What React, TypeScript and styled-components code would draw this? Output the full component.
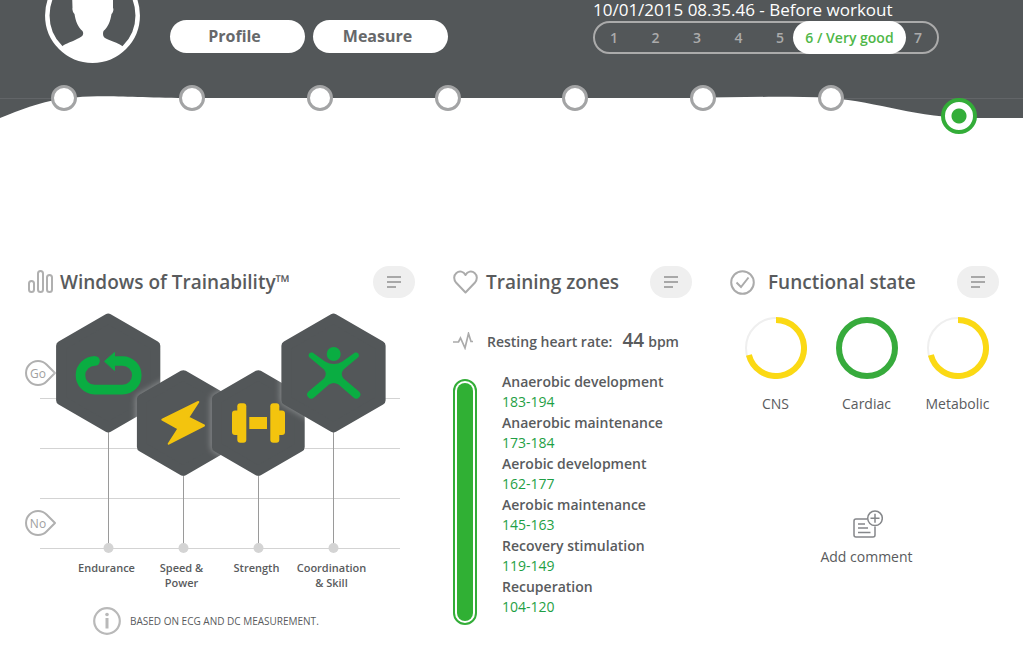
import React from "react";
import styled, { createGlobalStyle } from "styled-components";

const ink = "#595b5d";
const slate = "#535759";
const green = "#33ad38";
const grey = "#ababab";

const GlobalStyle = createGlobalStyle`
  *, *::before, *::after { box-sizing: border-box; }
  body {
    margin: 0;
    background: #fff;
    color: ${ink};
    font-family: "Open Sans", "Noto Sans", sans-serif;
    font-size: 14px;
  }
  button { font: inherit; color: inherit; border: 0; padding: 0; cursor: pointer; }
  ul, ol, dl, dd, h2, p, figure { margin: 0; padding: 0; list-style: none; }
`;

const Header = styled.header`
  position: relative;
  background: ${slate};
`;

const TopBar = styled.div`
  position: relative;
  z-index: 1;
  display: flex;
  align-items: flex-start;
  height: 80px;
  padding: 0 84px 0 44px;
`;

const Avatar = styled.svg`
  flex: none;
  width: 96px;
  height: 64px;
`;

const Actions = styled.nav`
  display: flex;
  gap: 8px;
  padding: 20px 0 0 30px;
`;

const PillButton = styled.button`
  width: 135px;
  height: 33px;
  padding-right: 6px;
  border-radius: 17px;
  background: #fff;
  color: #66686a;
  font-size: 16px;
  font-weight: 700;
  line-height: 33px;
`;

const Session = styled.section`
  width: 346px;
  margin-left: auto;
`;

const SessionTitle = styled.p`
  height: 21px;
  color: #fff;
  font-size: 17px;
  line-height: 19px;
  white-space: nowrap;
`;

const Levels = styled.div`
  display: flex;
  height: 33px;
  border: 2px solid ${grey};
  border-radius: 17px;
  color: ${grey};
  font-size: 14px;
  font-weight: 600;
  line-height: 29px;
`;

const LevelGroup = styled.ol`
  display: flex;
  flex: 1;
  justify-content: space-between;
  padding: 0 9px 0 15px;
`;

const CurrentLevel = styled.strong`
  width: 113px;
  margin: -2px 0;
  border-radius: 17px;
  background: #fff;
  color: #4fb748;
  font-weight: 600;
  line-height: 33px;
  text-align: center;
`;

const LastLevel = styled.span`
  width: 31px;
  padding-left: 8px;
`;

const Wave = styled.svg`
  position: absolute;
  inset: 80px 0 auto;
  width: 100%;
  height: 40px;
`;

const Timeline = styled.ol`
  position: relative;
  display: flex;
  height: 38px;
`;

const TimelineItem = styled.li<{ $current?: boolean }>`
  display: flex;
  flex: 1;
  justify-content: center;
  align-items: flex-start;
  padding-top: ${(p) => (p.$current ? 18 : 5)}px;
`;

const TimelineDot = styled.button<{ $current?: boolean }>`
  flex: none;
  width: ${(p) => (p.$current ? 36 : 26)}px;
  height: ${(p) => (p.$current ? 36 : 26)}px;
  border: ${(p) => (p.$current ? `4px solid ${green}` : "3px solid #a3a4a5")};
  border-radius: 50%;
  background: ${(p) => (p.$current ? `radial-gradient(circle, ${green} 7px, #fff 8px)` : "#fff")};
`;

const Main = styled.main`
  display: grid;
  grid-template-columns: 391fr 239fr 273fr;
  gap: 38px;
  padding: 148px 20px 24px 24px;
`;

const PanelHeader = styled.header<{ $gap?: number; $end?: number }>`
  display: flex;
  align-items: center;
  gap: ${(p) => p.$gap ?? 8}px;
  height: 32px;
  padding-right: ${(p) => p.$end ?? 0}px;

  svg { flex: none; }
`;

const PanelTitle = styled.h2`
  flex: 1;
  font-size: 19px;
  font-weight: 600;
  line-height: 32px;
  white-space: nowrap;
`;

const MenuButton = styled.button`
  display: grid;
  place-items: center;
  width: 42px;
  height: 32px;
  border-radius: 16px;
  background: #efefef;
`;

const Chart = styled.figure`
  width: 376px;
  margin-top: 12px;

  svg { display: block; }
`;

const ChartLabels = styled.ul`
  display: grid;
  grid-template-columns: repeat(4, 75px);
  padding: 4px 0 0 45px;
  font-size: 11px;
  font-weight: 600;
  line-height: 15px;
  text-align: center;
`;

const Note = styled.p`
  display: flex;
  align-items: center;
  gap: 8px;
  padding: 16px 0 0 68px;
  font-size: 10px;
  line-height: 30px;
`;

const RestingRate = styled.p`
  display: flex;
  align-items: center;
  gap: 14px;
  height: 32px;
  margin-top: 27px;
  font-weight: 600;
  line-height: 32px;
  white-space: nowrap;
`;

const Rate = styled.span`
  display: flex;
  align-items: baseline;
  gap: 4px;
`;

const RateValue = styled.strong`
  padding-left: 6px;
  font-size: 19px;
  font-weight: 600;
`;

const Zones = styled.div`
  display: flex;
  gap: 25px;
  margin-top: 15px;
`;

const ZoneGauge = styled.div`
  width: 24px;
  margin: 7px 0 -7px;
  border: 2px solid ${green};
  border-radius: 12px;
  padding: 2px;

  &::before {
    content: "";
    display: block;
    height: 100%;
    border-radius: 8px;
    background: #30b034;
  }
`;

const ZoneList = styled.dl`
  dt { font-weight: 600; line-height: 20px; }
  dd { padding-bottom: 2px; color: #1f9f45; line-height: 19px; }
`;

const Gauges = styled.ul`
  display: grid;
  grid-template-columns: repeat(3, 1fr);
  margin-top: 19px;
`;

const Gauge = styled.li`
  display: flex;
  flex-direction: column;
  align-items: center;
  gap: 15px;
  line-height: 20px;
`;

const CommentButton = styled.button`
  display: flex;
  flex-direction: column;
  align-items: center;
  gap: 8px;
  margin: 95px auto 0;
  background: none;
  line-height: 20px;
`;

const zones = [
  ["Anaerobic development", "183-194"],
  ["Anaerobic maintenance", "173-184"],
  ["Aerobic development", "162-177"],
  ["Aerobic maintenance", "145-163"],
  ["Recovery stimulation", "119-149"],
  ["Recuperation", "104-120"],
];

const Menu = ({ label }: { label: string }) => (
  <MenuButton type="button" aria-label={`${label} details`}>
    <svg width="16" height="14" viewBox="0 0 16 14" stroke="#a8a8a8" strokeWidth="2">
      <path d="M1 2H15M1 7H15M1 12H10" />
    </svg>
  </MenuButton>
);

const HexagonGroup = styled.g`
  filter: drop-shadow(-1px 0 3px rgba(255, 255, 255, 0.35));
`;

const Hexagon = ({ x, y, r, children }: { x: number; y: number; r: number; children: React.ReactNode }) => {
  const w = r * 0.866;
  return (
    <HexagonGroup>
      <path
        d={`M${x} ${y - r}L${x + w} ${y - r / 2}V${y + r / 2}L${x} ${y + r}L${x - w} ${y + r / 2}V${y - r / 2}Z`}
        fill={slate}
        stroke={slate}
        strokeWidth="10"
        strokeLinejoin="round"
      />
      {children}
    </HexagonGroup>
  );
};

const Marker = ({ y, text }: { y: number; text: string }) => (
  <g>
    <path
      d={`M55 ${y}L46.500 ${y - 8.5}A12 12 0 1 0 46.500 ${y + 8.5}Z`}
      fill="#fff"
      stroke="#b0b0b0"
      strokeWidth="2"
      strokeLinejoin="round"
    />
    <text x="38" y={y + 5} fill="#a0a0a0" fontSize="12" textAnchor="middle">
      {text}
    </text>
  </g>
);

const columns = [108.5, 183.5, 258.5, 333.5];

const TrainabilityChart = () => (
  <svg width="376" height="246" viewBox="24 310 376 246" role="img" aria-label="Trainability levels">
    <path d="M40 398.500H400M40 448.500H400M40 498.500H400M40 548.500H400" stroke="#d3d3d3" />
    {columns.map((x) => (
      <g key={x}>
        <path d={`M${x} 400V548`} stroke="#9a9a9a" />
        <circle cx={x} cy="548" r="5" fill="#d4d4d4" />
      </g>
    ))}
    <Marker y={373} text="Go" />
    <Marker y={523} text="No" />
    <Hexagon x={108.2} y={373} r={54.4}>
      <path
        d="M95 361A14.300 14.300 0 0 0 94.500 389.600H122.500A14.300 14.300 0 0 0 122.500 361H113"
        fill="none"
        stroke="#0aad42"
        strokeWidth="9.600"
      />
      <circle cx="95" cy="361" r="4.800" fill="#0aad42" />
      <path d="M104.500 361.300L114.500 352.500V370.500Z" fill="#0aad42" stroke="#0aad42" strokeLinejoin="round" />
    </Hexagon>
    <Hexagon x={183.3} y={423} r={47.8}>
      <path
        d="M198.300 402L188.200 417.500L204 425.500L168.700 443.700L178.500 428.500L162.300 419.700Z"
        fill="#f3c40e"
        stroke="#f3c40e"
        strokeWidth="2"
        strokeLinejoin="round"
      />
    </Hexagon>
    <Hexagon x={258.3} y={423} r={47.8}>
      <g fill="#f3c40e">
        <rect x="232" y="410.500" width="12" height="24.500" rx="3" />
        <rect x="237.300" y="403.300" width="9" height="39.400" rx="3" />
        <rect x="249.300" y="417" width="17.700" height="12" />
        <rect x="273" y="410.500" width="12" height="24.500" rx="3" />
        <rect x="270.300" y="403.300" width="9" height="39.400" rx="3" />
      </g>
    </Hexagon>
    <Hexagon x={333.5} y={373} r={54.4}>
      <g fill="#0aad42">
        <circle cx="333.700" cy="354" r="7" />
        <path d="M312.500 352.600L325 361.500Q333.700 366.500 342.400 361.500L355 352.600A3 3 0 0 1 358.500 357L343.500 369.500Q340 374 343.500 378.500L359 391.500A4 4 0 0 1 353.500 397.500L338.500 384.500Q333.700 381.500 329 384.500L314 397.500A4 4 0 0 1 308.500 391.500L324 378.500Q327.500 374 324 369.500L309 357A3 3 0 0 1 312.500 352.600Z" />
      </g>
    </Hexagon>
  </svg>
);

const Ring = ({ full }: { full?: boolean }) => (
  <svg width="62" height="62" viewBox="0 0 62 62" fill="none">
    <circle cx="31" cy="31" r="30" stroke="#efefef" strokeWidth="2" />
    {full ? (
      <circle cx="31" cy="31" r="28" stroke="#37ab3c" strokeWidth="6" />
    ) : (
      <path d="M31 3A28 28 0 1 1 3.900 38" stroke="#fbd914" strokeWidth="6" />
    )}
  </svg>
);

export default function App() {
  return (
    <>
      <GlobalStyle />
      <Header>
        <Wave viewBox="0 80 1023 40" preserveAspectRatio="none">
          <path d="M0 98.500H1023" stroke="#626568" />
          <path d="M0 118C28 107 48 98 90 96.500C120 95.500 145 98 192 98H690C740 97 790 96 830 98C880 102 915 118 975 118H1023V120H0Z" fill="#fff" />
        </Wave>
        <TopBar>
          <Avatar viewBox="0 0 96 64" role="img" aria-label="Athlete">
            <path
              fill="#fff"
              d="M28 -8H69V8C70 9 69 13 67.500 14C66.500 21 64 27 59.500 31C58 36 60 38 64 39.500C70 42 75 43.500 79 46.500C71 56 60 61 48.500 61C36 61 26 56 18 46.500C22 43 28 42 33 39C38 37 40.500 35 38.500 31C34 27 31.500 21 30.500 14C29 13 28 9 28.500 8Z"
            />
            <circle cx="48.500" cy="15.500" r="45.200" fill="none" stroke="#fff" strokeWidth="4.500" />
          </Avatar>
          <Actions>
            <PillButton type="button">Profile</PillButton>
            <PillButton type="button">Measure</PillButton>
          </Actions>
          <Session>
            <SessionTitle>10/01/2015 08.35.46 - Before workout</SessionTitle>
            <Levels>
              <LevelGroup>
                {[1, 2, 3, 4, 5].map((n) => (
                  <li key={n}>{n}</li>
                ))}
              </LevelGroup>
              <CurrentLevel>6 / Very good</CurrentLevel>
              <LastLevel>7</LastLevel>
            </Levels>
          </Session>
        </TopBar>
        <Timeline>
          {[1, 2, 3, 4, 5, 6, 7, 8].map((n) => (
            <TimelineItem key={n} $current={n === 8}>
              <TimelineDot type="button" $current={n === 8} aria-label={`Measurement ${n}`} />
            </TimelineItem>
          ))}
        </Timeline>
      </Header>

      <Main>
        <section>
          <PanelHeader $gap={7}>
            <svg width="29" height="26" viewBox="24 269 29 26" fill="none" stroke="#b0b0b0" strokeWidth="2">
              <rect x="29" y="281" width="5" height="11" rx="2.500" />
              <rect x="38" y="271" width="5" height="21" rx="2.500" />
              <rect x="47" y="275" width="5" height="17" rx="2.500" />
            </svg>
            <PanelTitle>Windows of Trainability™</PanelTitle>
            <Menu label="Windows of Trainability" />
          </PanelHeader>
          <Chart>
            <TrainabilityChart />
            <ChartLabels>
              <li>Endurance</li>
              <li>Speed &amp;<br />Power</li>
              <li>Strength</li>
              <li>Coordination<br />&amp; Skill</li>
            </ChartLabels>
          </Chart>
          <Note>
            <svg width="30" height="30" viewBox="0 0 30 30" fill="none" stroke="#b9b9b9">
              <circle cx="15" cy="15" r="12.800" strokeWidth="2.200" />
              <path d="M15 12V22.500" strokeWidth="3" />
              <circle cx="15" cy="8.500" r="1.800" fill="#b9b9b9" stroke="none" />
            </svg>
            BASED ON ECG AND DC MEASUREMENT.
          </Note>
        </section>

        <section>
          <PanelHeader>
            <svg width="25" height="24" viewBox="0 0 25 24" fill="none" stroke={grey} strokeWidth="2" strokeLinejoin="round">
              <path d="M12.500 22.500L3.200 12.800C0.300 9.600 0.700 5.200 3.400 2.900C6.300 0.500 10.500 1.200 12.500 5C14.500 1.200 18.700 0.500 21.600 2.900C24.300 5.200 24.700 9.600 21.800 12.800Z" />
            </svg>
            <PanelTitle>Training zones</PanelTitle>
            <Menu label="Training zones" />
          </PanelHeader>
          <RestingRate>
            <svg width="20" height="18" viewBox="0 0 20 18" fill="none" stroke={grey} strokeWidth="1.700">
              <path d="M0 10H5.500L7.500 6L12 16L15.500 1.500L18 9.500H20" />
            </svg>
            <Rate>
              Resting heart rate: <RateValue>44</RateValue> bpm
            </Rate>
          </RestingRate>
          <Zones>
            <ZoneGauge />
            <ZoneList>
              {zones.map(([name, range]) => (
                <React.Fragment key={name}>
                  <dt>{name}</dt>
                  <dd>{range}</dd>
                </React.Fragment>
              ))}
            </ZoneList>
          </Zones>
        </section>

        <section>
          <PanelHeader $gap={13} $end={4}>
            <svg width="25" height="25" viewBox="0 0 25 25" fill="none" stroke={grey} strokeWidth="2">
              <circle cx="12.500" cy="12.500" r="11.300" />
              <path d="M6.500 12.500L11 17L18.500 7.500" />
            </svg>
            <PanelTitle>Functional state</PanelTitle>
            <Menu label="Functional state" />
          </PanelHeader>
          <Gauges>
            <Gauge><Ring />CNS</Gauge>
            <Gauge><Ring full />Cardiac</Gauge>
            <Gauge><Ring />Metabolic</Gauge>
          </Gauges>
          <CommentButton type="button">
            <svg width="34" height="30" viewBox="-2 -1 34 30" fill="none" stroke="#85878a" strokeWidth="1.500">
              <path d="M16.500 9H5Q3 9 3 11V25Q3 27 5 27H22Q24 27 24 25V16.500" />
              <path d="M7 14H14M7 18H17M7 22.500H19.500" />
              <circle cx="24" cy="8.300" r="7.300" />
              <path d="M24 3.800V12.800M19.500 8.300H28.500" />
            </svg>
            Add comment
          </CommentButton>
        </section>
      </Main>
    </>
  );
}
